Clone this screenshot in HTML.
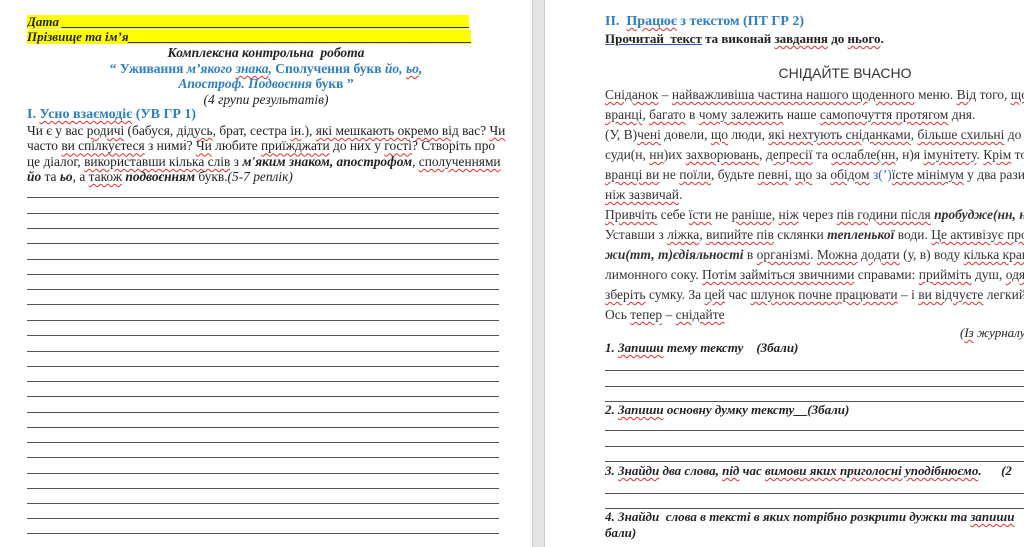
<!DOCTYPE html>
<html><head><meta charset="utf-8"><style>
*{margin:0;padding:0;box-sizing:border-box}
body{width:1024px;height:547px;overflow:hidden;background:#fff;font-family:"Liberation Serif","DejaVu Serif",serif;color:#222;position:relative}
.abs{position:absolute;white-space:nowrap}
#gap{position:absolute;left:532px;top:0;width:13px;height:547px;background:#e6e6e6;border-left:1px solid #ccc;border-right:1px solid #ccc}
.ln{position:absolute;height:1px;background:#555}
.w{text-decoration:underline wavy #e03030;text-decoration-thickness:1px;text-underline-offset:2px}
.blue{color:#2d7fc1}
.bi{font-weight:bold;font-style:italic}
.yl{position:absolute;left:27px;width:442px;height:14px;background:#ffff00}
</style></head><body>
<div class="yl" style="top:15px"></div>
<div class="yl" style="top:30px;width:444px"></div>
<div class="abs bi" style="left:27px;top:14px;font-size:13px;line-height:15px;width:442px;overflow:hidden">Дата ____________________________________________________________________</div>
<div class="abs bi" style="left:27px;top:29px;font-size:13px;line-height:15px;width:444px;overflow:hidden">Прізвище та ім’я_____________________________________________________________</div>
<div class="abs bi" style="left:0;width:532px;text-align:center;top:45px;font-size:13.5px;line-height:16px">Комплексна контрольна &nbsp;робота</div>
<div class="abs blue" style="left:0;width:532px;text-align:center;top:61px;font-size:13.5px;line-height:16px;font-weight:bold">“ Уживання <i>м’якого <span class="w">знака</span>,</i> Сполучення букв <i>йо, <span class="w">ьо</span>,</i></div>
<div class="abs blue" style="left:0;width:532px;text-align:center;top:76px;font-size:13.5px;line-height:16px;font-weight:bold"><i>Апостроф. Подвоєння</i> букв ”</div>
<div class="abs" style="left:0;width:532px;text-align:center;top:92px;font-size:13.5px;line-height:16px;font-style:italic">(4 групи результатів)</div>
<div class="abs blue" style="left:27px;top:106px;font-size:14px;line-height:17px;font-weight:bold">I. <span class="w">Усно взаємодіє</span> (УВ ГР 1)</div>
<div class="abs" style="left:27px;top:123px;font-size:13.4px;line-height:15.4px">Чи є у вас <span class="w">родичі</span> (бабуся, <span class="w">дідусь</span>, брат, сестра <span class="w">ін</span>.), <span class="w">які мешкають окремо від</span> вас? <span class="w">Чи</span><br>часто <span class="w">ви спілкуєтеся</span> з ними? <span class="w">Чи</span> любите <span class="w">приїжджати</span> до них у <span class="w">гості</span>? Створіть про<br>це діалог, <span class="w">використавши кілька слів</span> з <b><i>м'яким знаком, апострофом</i></b>, <span class="w">сполученнями</span><br><b><i>йо</i></b> та <b><i>ьо</i></b>, а <span class="w">також</span> <b><i>подвоєнням</i></b> букв.<i>(5-7 реплік)</i></div>
<div id="gap"></div>
<div class="abs blue" style="left:605px;top:13px;font-size:14px;line-height:17px;font-weight:bold">II. &nbsp;<span class="w">Працює</span> з текстом (ПТ ГР 2)</div>
<div class="abs" style="left:605px;top:30px;font-size:13px;line-height:17px;font-weight:bold"><span style="text-decoration:underline #2d5fb0">Прочитай &nbsp;текст</span> та виконай <span class="w">завдання</span> до <span class="w">нього</span>.</div>
<div class="abs" style="left:545px;width:600px;text-align:center;top:65px;font-size:14px;line-height:17px;font-family:'Liberation Sans',sans-serif;color:#333">СНІДАЙТЕ ВЧАСНО</div>
<div class="abs" style="left:605px;top:85px;font-size:13.5px;line-height:20px;color:#333">
<span class="w">Сніданок</span> – <span class="w">найважливіша частина нашого щоденного</span> меню. <span class="w">Від</span> того, <span class="w">що</span> ви<br>
<span class="w">вранці</span>, <span class="w">багато</span> в <span class="w">чому залежить</span> наше <span class="w">самопочуття протягом</span> дня.<br>
(У, В)<span class="w">чені</span> довели, <span class="w">що</span> люди, <span class="w">які нехтують сніданками</span>, <span class="w">більше схильні</span> до серцево-<br>
суди(н, <span class="w">нн</span>)их <span class="w">захворювань</span>, <span class="w">депресії</span> та <span class="w">ослабле(нн</span>, н)я <span class="w">імунітету</span>. <span class="w">Крім</span> того<br>
<span class="w">вранці ви</span> не <span class="w">поїли</span>, будьте <span class="w">певні</span>, <span class="w">що</span> за <span class="w">обідом</span> <span style="color:#2d5fb0">з(’)</span><span class="w">їсте мінімум</span> у два рази більше<br>
<span class="w">ніж зазвичай</span>.<br>
<span class="w">Привчіть</span> себе <span class="w">їсти</span> не <span class="w">раніше</span>, <span class="w">ніж</span> через <span class="w">пів години після</span> <b><i>пробудже(нн, н)я</i></b><br>
Уставши з <span class="w">ліжка</span>, <span class="w">випийте пів</span> склянки <b><i>тепленької</i></b> води. <span class="w">Це активізує процеси</span><br>
<b><i>жи(тт, т)єдіяльності</i></b> в <span class="w">організмі</span>. <span class="w">Можна</span> <span class="w">додати</span> (у, в) воду <span class="w">кілька крапель</span><br>
лимонного соку. <span class="w">Потім займіться звичними</span> справами: <span class="w">прийміть</span> душ, <span class="w">одягніться</span><br>
<span class="w">зберіть</span> сумку. За <span class="w">цей</span> час <span class="w">шлунок почне працювати</span> – і <span class="w">ви відчуєте</span> легкий голод<br>
Ось <span class="w">тепер</span> – <span class="w">снідайте</span></div>
<div class="abs" style="left:960px;top:325px;font-size:13px;line-height:16px;font-style:italic">(<span class="w">Із</span> журналу</div>
<div class="abs bi" style="left:605px;top:340px;font-size:13px;line-height:16px">1. <span class="w">Запиши</span> тему тексту &nbsp;&nbsp;&nbsp;(3бали)</div>
<div class="abs bi" style="left:605px;top:402px;font-size:13px;line-height:16px">2. <span class="w">Запиши</span> основну думку тексту<span style="text-decoration:underline #2d5fb0">__</span>(3бали)</div>
<div class="abs bi" style="left:605px;top:463px;font-size:13px;line-height:16px">3. <span class="w">Знайди</span> два слова, <span class="w">під</span> час <span class="w">вимови яких приголосні уподібнюємо</span>. &nbsp;&nbsp;&nbsp;&nbsp;&nbsp;(2</div>
<div class="abs bi" style="left:605px;top:509px;font-size:13px;line-height:16px">4. Знайди &nbsp;слова в тексті в яких потрібно розкрити дужки та <span class="w">запиши</span></div>
<div class="abs bi" style="left:605px;top:525px;font-size:13px;line-height:16px">бали)</div>
<div class="ln" style="left:605px;width:419px;top:370px"></div>
<div class="ln" style="left:605px;width:419px;top:386px"></div>
<div class="ln" style="left:605px;width:419px;top:401px"></div>
<div class="ln" style="left:605px;width:419px;top:430px"></div>
<div class="ln" style="left:605px;width:419px;top:446px"></div>
<div class="ln" style="left:605px;width:419px;top:461px"></div>
<div class="ln" style="left:605px;width:419px;top:493px"></div>
<div class="ln" style="left:605px;width:419px;top:508px"></div>
<div class="ln" style="left:27px;width:472px;top:197px"></div>
<div class="ln" style="left:27px;width:472px;top:213px"></div>
<div class="ln" style="left:27px;width:472px;top:228px"></div>
<div class="ln" style="left:27px;width:472px;top:243px"></div>
<div class="ln" style="left:27px;width:472px;top:259px"></div>
<div class="ln" style="left:27px;width:472px;top:274px"></div>
<div class="ln" style="left:27px;width:472px;top:289px"></div>
<div class="ln" style="left:27px;width:472px;top:304px"></div>
<div class="ln" style="left:27px;width:472px;top:320px"></div>
<div class="ln" style="left:27px;width:472px;top:335px"></div>
<div class="ln" style="left:27px;width:472px;top:351px"></div>
<div class="ln" style="left:27px;width:472px;top:366px"></div>
<div class="ln" style="left:27px;width:472px;top:381px"></div>
<div class="ln" style="left:27px;width:472px;top:396px"></div>
<div class="ln" style="left:27px;width:472px;top:412px"></div>
<div class="ln" style="left:27px;width:472px;top:427px"></div>
<div class="ln" style="left:27px;width:472px;top:442px"></div>
<div class="ln" style="left:27px;width:472px;top:457px"></div>
<div class="ln" style="left:27px;width:472px;top:473px"></div>
<div class="ln" style="left:27px;width:472px;top:488px"></div>
<div class="ln" style="left:27px;width:472px;top:503px"></div>
<div class="ln" style="left:27px;width:472px;top:518px"></div>
<div class="ln" style="left:27px;width:472px;top:533px"></div>
</body></html>
